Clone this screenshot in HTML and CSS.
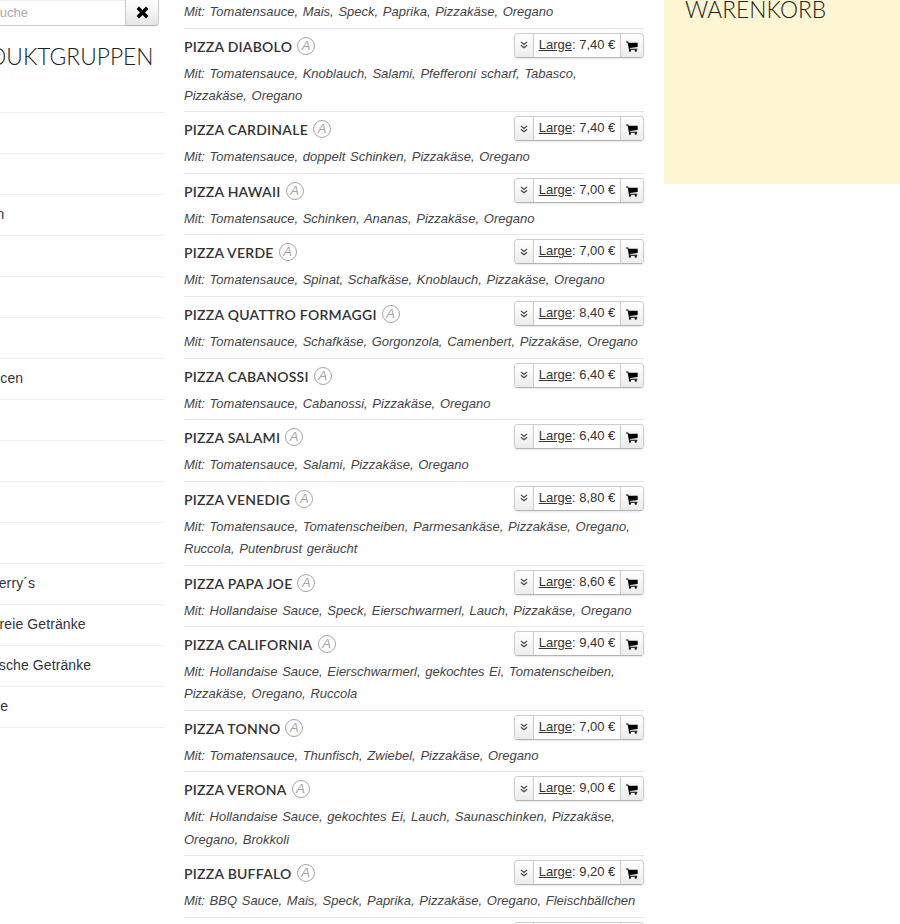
FILE: index.html
```html
<!DOCTYPE html>
<html lang="de">
<head>
<meta charset="utf-8">
<title>Pizza</title>
<link rel="stylesheet" href="styles.css">
</head>
<body>
<svg class="defs" width="0" height="0" aria-hidden="true">
  <symbol id="cart" viewBox="0 0 13 12"><path d="M0 0.6h2.4l.4 1.3h9.9v4.7l-8.6 1 .2.9h8v1.1H3.2L1.7 1.7H0z"/><circle cx="4.2" cy="10.6" r="1.2"/><circle cx="10.6" cy="10.6" r="1.2"/></symbol>
  <symbol id="chev" viewBox="0 0 9 9"><path d="M1 1l3.5 2.8L8 1M1 4.8l3.5 2.8L8 4.8" fill="none" stroke="currentColor" stroke-width="1.4"/></symbol>
</svg>
<div class="page">
  <aside class="left">
    <div class="search">
      <div class="search-input">Suche</div>
      <button class="search-btn" type="button"><svg width="13" height="13" viewBox="0 0 13 13"><path d="M3 .6L6.5 4 10 .6 12.4 3 9 6.5l3.4 3.5L10 12.4 6.5 9 3 12.4.6 10 4 6.5.6 3z"/></svg></button>
    </div>
    <h2 class="left-title">PRODUKTGRUPPEN</h2>
    <ul class="groups">
      <li>Pizza</li>
      <li>Pasta</li>
      <li>Beilagen</li>
      <li>Salate</li>
      <li>Burger</li>
      <li>Snacks</li>
      <li>Dip-Saucen</li>
      <li>Wraps</li>
      <li>Menüs</li>
      <li>Fisch</li>
      <li>Extras</li>
      <li>Ben &amp; Jerry´s</li>
      <li>Alkoholfreie Getränke</li>
      <li>Alkoholische Getränke</li>
      <li>Eiscreme</li>
    </ul>
  </aside>
  <main class="menu">
    <article class="item"><div class="head"><h3>Pizza Mais</h3></div><p>Mit: Tomatensauce, Mais, Speck, Paprika, Pizzakäse, Oregano</p></article>
    <article class="item"><div class="head"><h3>Pizza Diabolo</h3><span class="allergen">A</span><div class="order"><button type="button" class="more"><svg width="8" height="8"><use href="#chev"/></svg></button><span class="price"><u>Large</u>: 7,40 €</span><button type="button" class="add"><svg width="12" height="11"><use href="#cart"/></svg></button></div></div><p>Mit: Tomatensauce, Knoblauch, Salami, Pfefferoni scharf, Tabasco, Pizzakäse, Oregano</p></article>
    <article class="item"><div class="head"><h3>Pizza Cardinale</h3><span class="allergen">A</span><div class="order"><button type="button" class="more"><svg width="8" height="8"><use href="#chev"/></svg></button><span class="price"><u>Large</u>: 7,40 €</span><button type="button" class="add"><svg width="12" height="11"><use href="#cart"/></svg></button></div></div><p>Mit: Tomatensauce, doppelt Schinken, Pizzakäse, Oregano</p></article>
    <article class="item"><div class="head"><h3>Pizza Hawaii</h3><span class="allergen">A</span><div class="order"><button type="button" class="more"><svg width="8" height="8"><use href="#chev"/></svg></button><span class="price"><u>Large</u>: 7,00 €</span><button type="button" class="add"><svg width="12" height="11"><use href="#cart"/></svg></button></div></div><p>Mit: Tomatensauce, Schinken, Ananas, Pizzakäse, Oregano</p></article>
    <article class="item"><div class="head"><h3>Pizza Verde</h3><span class="allergen">A</span><div class="order"><button type="button" class="more"><svg width="8" height="8"><use href="#chev"/></svg></button><span class="price"><u>Large</u>: 7,00 €</span><button type="button" class="add"><svg width="12" height="11"><use href="#cart"/></svg></button></div></div><p>Mit: Tomatensauce, Spinat, Schafkäse, Knoblauch, Pizzakäse, Oregano</p></article>
    <article class="item"><div class="head"><h3>Pizza Quattro Formaggi</h3><span class="allergen">A</span><div class="order"><button type="button" class="more"><svg width="8" height="8"><use href="#chev"/></svg></button><span class="price"><u>Large</u>: 8,40 €</span><button type="button" class="add"><svg width="12" height="11"><use href="#cart"/></svg></button></div></div><p>Mit: Tomatensauce, Schafkäse, Gorgonzola, Camenbert, Pizzakäse, Oregano</p></article>
    <article class="item"><div class="head"><h3>Pizza Cabanossi</h3><span class="allergen">A</span><div class="order"><button type="button" class="more"><svg width="8" height="8"><use href="#chev"/></svg></button><span class="price"><u>Large</u>: 6,40 €</span><button type="button" class="add"><svg width="12" height="11"><use href="#cart"/></svg></button></div></div><p>Mit: Tomatensauce, Cabanossi, Pizzakäse, Oregano</p></article>
    <article class="item"><div class="head"><h3>Pizza Salami</h3><span class="allergen">A</span><div class="order"><button type="button" class="more"><svg width="8" height="8"><use href="#chev"/></svg></button><span class="price"><u>Large</u>: 6,40 €</span><button type="button" class="add"><svg width="12" height="11"><use href="#cart"/></svg></button></div></div><p>Mit: Tomatensauce, Salami, Pizzakäse, Oregano</p></article>
    <article class="item"><div class="head"><h3>Pizza Venedig</h3><span class="allergen">A</span><div class="order"><button type="button" class="more"><svg width="8" height="8"><use href="#chev"/></svg></button><span class="price"><u>Large</u>: 8,80 €</span><button type="button" class="add"><svg width="12" height="11"><use href="#cart"/></svg></button></div></div><p>Mit: Tomatensauce, Tomatenscheiben, Parmesankäse, Pizzakäse, Oregano, Ruccola, Putenbrust geräucht</p></article>
    <article class="item"><div class="head"><h3>Pizza Papa Joe</h3><span class="allergen">A</span><div class="order"><button type="button" class="more"><svg width="8" height="8"><use href="#chev"/></svg></button><span class="price"><u>Large</u>: 8,60 €</span><button type="button" class="add"><svg width="12" height="11"><use href="#cart"/></svg></button></div></div><p>Mit: Hollandaise Sauce, Speck, Eierschwarmerl, Lauch, Pizzakäse, Oregano</p></article>
    <article class="item"><div class="head"><h3>Pizza California</h3><span class="allergen">A</span><div class="order"><button type="button" class="more"><svg width="8" height="8"><use href="#chev"/></svg></button><span class="price"><u>Large</u>: 9,40 €</span><button type="button" class="add"><svg width="12" height="11"><use href="#cart"/></svg></button></div></div><p>Mit: Hollandaise Sauce, Eierschwarmerl, gekochtes Ei, Tomatenscheiben, Pizzakäse, Oregano, Ruccola</p></article>
    <article class="item"><div class="head"><h3>Pizza Tonno</h3><span class="allergen">A</span><div class="order"><button type="button" class="more"><svg width="8" height="8"><use href="#chev"/></svg></button><span class="price"><u>Large</u>: 7,00 €</span><button type="button" class="add"><svg width="12" height="11"><use href="#cart"/></svg></button></div></div><p>Mit: Tomatensauce, Thunfisch, Zwiebel, Pizzakäse, Oregano</p></article>
    <article class="item"><div class="head"><h3>Pizza Verona</h3><span class="allergen">A</span><div class="order"><button type="button" class="more"><svg width="8" height="8"><use href="#chev"/></svg></button><span class="price"><u>Large</u>: 9,00 €</span><button type="button" class="add"><svg width="12" height="11"><use href="#cart"/></svg></button></div></div><p>Mit: Hollandaise Sauce, gekochtes Ei, Lauch, Saunaschinken, Pizzakäse, Oregano, Brokkoli</p></article>
    <article class="item"><div class="head"><h3>Pizza Buffalo</h3><span class="allergen">A</span><div class="order"><button type="button" class="more"><svg width="8" height="8"><use href="#chev"/></svg></button><span class="price"><u>Large</u>: 9,20 €</span><button type="button" class="add"><svg width="12" height="11"><use href="#cart"/></svg></button></div></div><p>Mit: BBQ Sauce, Mais, Speck, Paprika, Pizzakäse, Oregano, Fleischbällchen</p></article>
    <article class="item"><div class="head"><div class="order"><button type="button" class="more"><svg width="8" height="8"><use href="#chev"/></svg></button><span class="price"></span><button type="button" class="add"><svg width="12" height="11"><use href="#cart"/></svg></button></div></div></article>
  </main>
  <aside class="cart">
    <h2>WARENKORB</h2>
  </aside>
</div>
</body>
</html>
```
FILE: styles.css
```css
* { box-sizing: border-box; }
html, body { margin: 0; padding: 0; }
body {
  height: 924px;
  overflow: hidden;
  background: #fff;
  color: #333;
  font-family: "Liberation Sans", Arial, sans-serif;
  font-size: 13px;
}
.defs { position: absolute; }
.page {
  display: grid;
  grid-template-columns: 164px 460px 236px;
  column-gap: 20px;
  height: 924px;
  overflow: hidden;
}

/* left column */
.left { overflow: hidden; min-width: 0; }
.search {
  display: flex;
  height: 26px;
  margin-left: -40px;
  margin-right: 5px;
}
.search-input {
  flex: 1;
  border: 1px solid #ccc;
  border-top: 0;
  border-right: 0;
  box-shadow: inset 0 1px 1px rgba(0,0,0,.075);
  color: #aaa;
  font-size: 13px;
  line-height: 25px;
  padding-left: 30px;
}
.search-btn {
  width: 34px;
  padding: 0;
  border: 1px solid #ccc;
  border-top: 0;
  border-bottom-color: #b3b3b3;
  border-radius: 0 0 4px 0;
  background: linear-gradient(#fff, #e6e6e6);
  box-shadow: 0 1px 2px rgba(0,0,0,.05);
  display: flex;
  align-items: center;
  justify-content: center;
}
.left-title {
  margin: 16px 0 0 -56px;
  white-space: nowrap;
  font-family: Lato, sans-serif;
  font-weight: 300;
  font-size: 22.8px;
  line-height: 28px;
  color: #222;
}
.groups {
  list-style: none;
  margin: 42px 0 0 -51px;
  padding: 0;
}
.groups li {
  height: 41px;
  border-top: 1px solid #eee;
  font-size: 14px;
  letter-spacing: .1px;
  line-height: 38px;
  white-space: nowrap;
}
.groups li:last-child { border-bottom: 1px solid #eee; height: 42px; }

/* menu */
.menu { margin-top: -34px; min-width: 0; }
.item {
  border-top: 1px solid #e6e6e6;
  padding: 4px 0 4.5px;
}
.item:first-child { border-top-color: transparent; }
.head {
  display: flex;
  align-items: flex-start;
  height: 30px;
}
.head h3 {
  margin: 0;
  font-family: Lato, sans-serif;
  font-weight: 600;
  font-size: 14px;
  letter-spacing: .25px;
  line-height: 27px;
  text-transform: uppercase;
  color: #333;
  white-space: nowrap;
}
.allergen {
  width: 18px;
  height: 18px;
  margin: 4px 0 0 5px;
  border: 1.3px solid #a5a5a5;
  border-radius: 50%;
  color: #a5a5a5;
  font-size: 13px;
  font-style: italic;
  line-height: 15.5px;
  text-align: center;
}
.order {
  display: flex;
  margin-left: auto;
  height: 25px;
  border: 1px solid #ccc;
  border-bottom-color: #b3b3b3;
  border-radius: 4px;
  box-shadow: 0 1px 2px rgba(0,0,0,.1);
  overflow: hidden;
}
.order button {
  padding: 0;
  border: 0;
  background: linear-gradient(#fff, #ececec);
  color: #444;
  display: flex;
  align-items: center;
  justify-content: center;
}
.order .more { width: 18px; }
.order .add { width: 22px; padding-top: 2px; }
.price {
  width: 88px;
  border-left: 1px solid #ccc;
  border-right: 1px solid #ccc;
  background: #fff;
  text-align: center;
  line-height: 22px;
  white-space: nowrap;
}
.item p {
  margin: 0;
  font-style: italic;
  font-size: 13px;
  line-height: 22.1px;
  word-spacing: 1.05px;
  color: #444;
}

/* cart */
.cart {
  margin-top: -20px;
  height: 204px;
  background: #fef6d3;
  padding: 14px 21px;
}
.cart h2 {
  margin: 0;
  font-family: Lato, sans-serif;
  font-weight: 300;
  font-size: 22.8px;
  line-height: 30px;
  color: #222;
}
```
